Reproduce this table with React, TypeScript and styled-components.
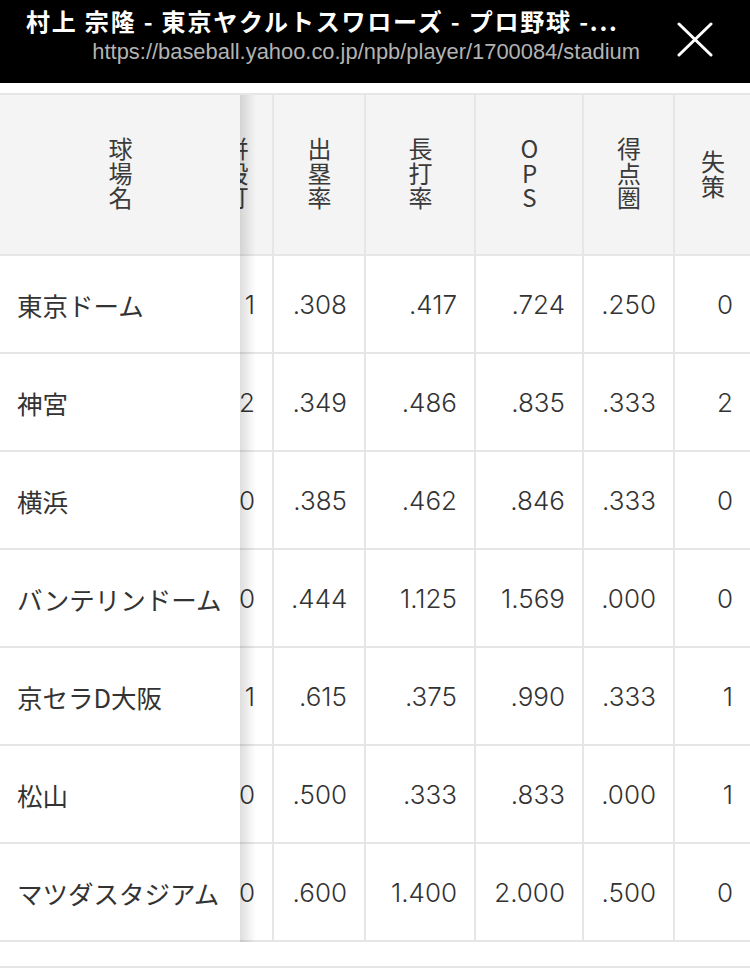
import React, { useLayoutEffect, useRef } from "react";
import styled, { createGlobalStyle } from "styled-components";

const GlobalStyle = createGlobalStyle`
  html, body { margin: 0; padding: 0; background: #fff; }
  body {
    font-family: "Noto Sans CJK JP", "Noto Sans", sans-serif;
    color: #333;
    -webkit-font-smoothing: antialiased;
  }
  * { box-sizing: border-box; }
`;

const TopBar = styled.header`
  display: flex;
  height: 83px;
  background: #000;
  padding-left: 26px;
`;

const TitleBlock = styled.div`
  width: 614px;
  padding-top: 7px;
  display: flex;
  flex-direction: column;
  min-width: 0;
`;

const Title = styled.div`
  color: #fff;
  font-family: "Noto Sans CJK JP", sans-serif;
  font-weight: 700;
  font-size: 24px;
  letter-spacing: 1.8px;
  line-height: 28px;
  white-space: nowrap;
`;

const Url = styled.div`
  margin-top: 6px;
  color: #b3b3b3;
  font-family: "Liberation Sans", Arial, sans-serif;
  font-size: 21.9px;
  line-height: 22px;
  text-align: right;
  white-space: nowrap;
`;

const CloseButton = styled.button`
  width: 110px;
  height: 77px;
  display: flex;
  align-items: center;
  justify-content: center;
  background: none;
  border: 0;
  padding: 0;
  cursor: pointer;
`;

const Scroller = styled.div`
  margin-top: 10px;
  overflow-x: auto;
  scrollbar-width: none;
  &::-webkit-scrollbar { display: none; }
`;

const Table = styled.table`
  border-collapse: separate;
  border-spacing: 0;
  table-layout: fixed;
  width: 790px;
`;

const HeadCell = styled.th<{ $sticky?: boolean }>`
  height: 163px;
  padding: 6px 0 0;
  background: #f4f4f4;
  border-top: 2px solid #e6e6e6;
  border-bottom: 2px solid #e6e6e6;
  border-right: ${(p) => (p.$sticky ? "0" : "2px solid #e6e6e6")};
  text-align: center;
  vertical-align: middle;
  font-weight: 400;
  font-size: 24px;
  color: #3a3a3a;
  ${(p) =>
    p.$sticky &&
    `
    position: sticky;
    left: 0;
    z-index: 2;
  `}
  &:last-child { border-right: 0; }
`;

const VerticalLabel = styled.span`
  display: inline-block;
  writing-mode: vertical-rl;
  text-orientation: upright;
  line-height: 28px;
  letter-spacing: 0.5px;
  white-space: nowrap;
`;

const Cell = styled.td<{ $sticky?: boolean }>`
  height: 98px;
  padding: 0 17px;
  background: #fff;
  border-bottom: 2px solid #e6e6e6;
  border-right: ${(p) => (p.$sticky ? "0" : "2px solid #e6e6e6")};
  text-align: ${(p) => (p.$sticky ? "left" : "right")};
  vertical-align: middle;
  font-family: ${(p) =>
    p.$sticky ? `"Noto Sans CJK JP", sans-serif` : `Inter, "Noto Sans", sans-serif`};
  font-weight: ${(p) => (p.$sticky ? 400 : 300)};
  font-size: ${(p) => (p.$sticky ? "25.5px" : "26px")};
  color: #333;
  white-space: nowrap;
  ${(p) =>
    p.$sticky &&
    `
    position: sticky;
    left: 0;
    z-index: 2;
  `}
  &:last-child { border-right: 0; }
`;

const Shadow = styled.span`
  position: absolute;
  top: 0;
  bottom: -2px;
  right: -16px;
  width: 16px;
  background: linear-gradient(to right, rgba(0, 0, 0, 0.13), rgba(0, 0, 0, 0));
  pointer-events: none;
`;

const Footer = styled.div`
  margin-top: 24px;
  border-top: 2px solid #e6e6e6;
  height: 10px;
`;

const headers = ["球場名", "併殺打", "出塁率", "長打率", "OPS", "得点圏", "失策"];
const widths = [240, 74, 92, 110, 108, 91, 75];

const rows: string[][] = [
  ["東京ドーム", "1", ".308", ".417", ".724", ".250", "0"],
  ["神宮", "2", ".349", ".486", ".835", ".333", "2"],
  ["横浜", "0", ".385", ".462", ".846", ".333", "0"],
  ["バンテリンドーム", "0", ".444", "1.125", "1.569", ".000", "0"],
  ["京セラD大阪", "1", ".615", ".375", ".990", ".333", "1"],
  ["松山", "0", ".500", ".333", ".833", ".000", "1"],
  ["マツダスタジアム", "0", ".600", "1.400", "2.000", ".500", "0"],
];

export default function App() {
  const ref = useRef<HTMLDivElement>(null);
  useLayoutEffect(() => {
    if (ref.current) ref.current.scrollLeft = ref.current.scrollWidth;
  }, []);

  return (
    <>
      <GlobalStyle />
      <TopBar>
        <TitleBlock>
          <Title>村上 宗隆 - 東京ヤクルトスワローズ - プロ野球 -...</Title>
          <Url>https://baseball.yahoo.co.jp/npb/player/1700084/stadium</Url>
        </TitleBlock>
        <CloseButton aria-label="閉じる">
          <svg width="36" height="36" viewBox="0 0 36 36">
            <path d="M2 3 L34 34 M34 3 L2 34" stroke="#fff" strokeWidth="3" strokeLinecap="round" fill="none" />
          </svg>
        </CloseButton>
      </TopBar>
      <Scroller ref={ref}>
        <Table>
          <colgroup>
            {widths.map((w, i) => (
              <col key={i} style={{ width: w }} />
            ))}
          </colgroup>
          <thead>
            <tr>
              {headers.map((h, i) => (
                <HeadCell key={h} $sticky={i === 0}>
                  <VerticalLabel>{h}</VerticalLabel>
                  {i === 0 && <Shadow />}
                </HeadCell>
              ))}
            </tr>
          </thead>
          <tbody>
            {rows.map((r) => (
              <tr key={r[0]}>
                {r.map((v, i) => (
                  <Cell key={i} $sticky={i === 0}>
                    {v}
                    {i === 0 && <Shadow />}
                  </Cell>
                ))}
              </tr>
            ))}
          </tbody>
        </Table>
      </Scroller>
      <Footer />
    </>
  );
}
